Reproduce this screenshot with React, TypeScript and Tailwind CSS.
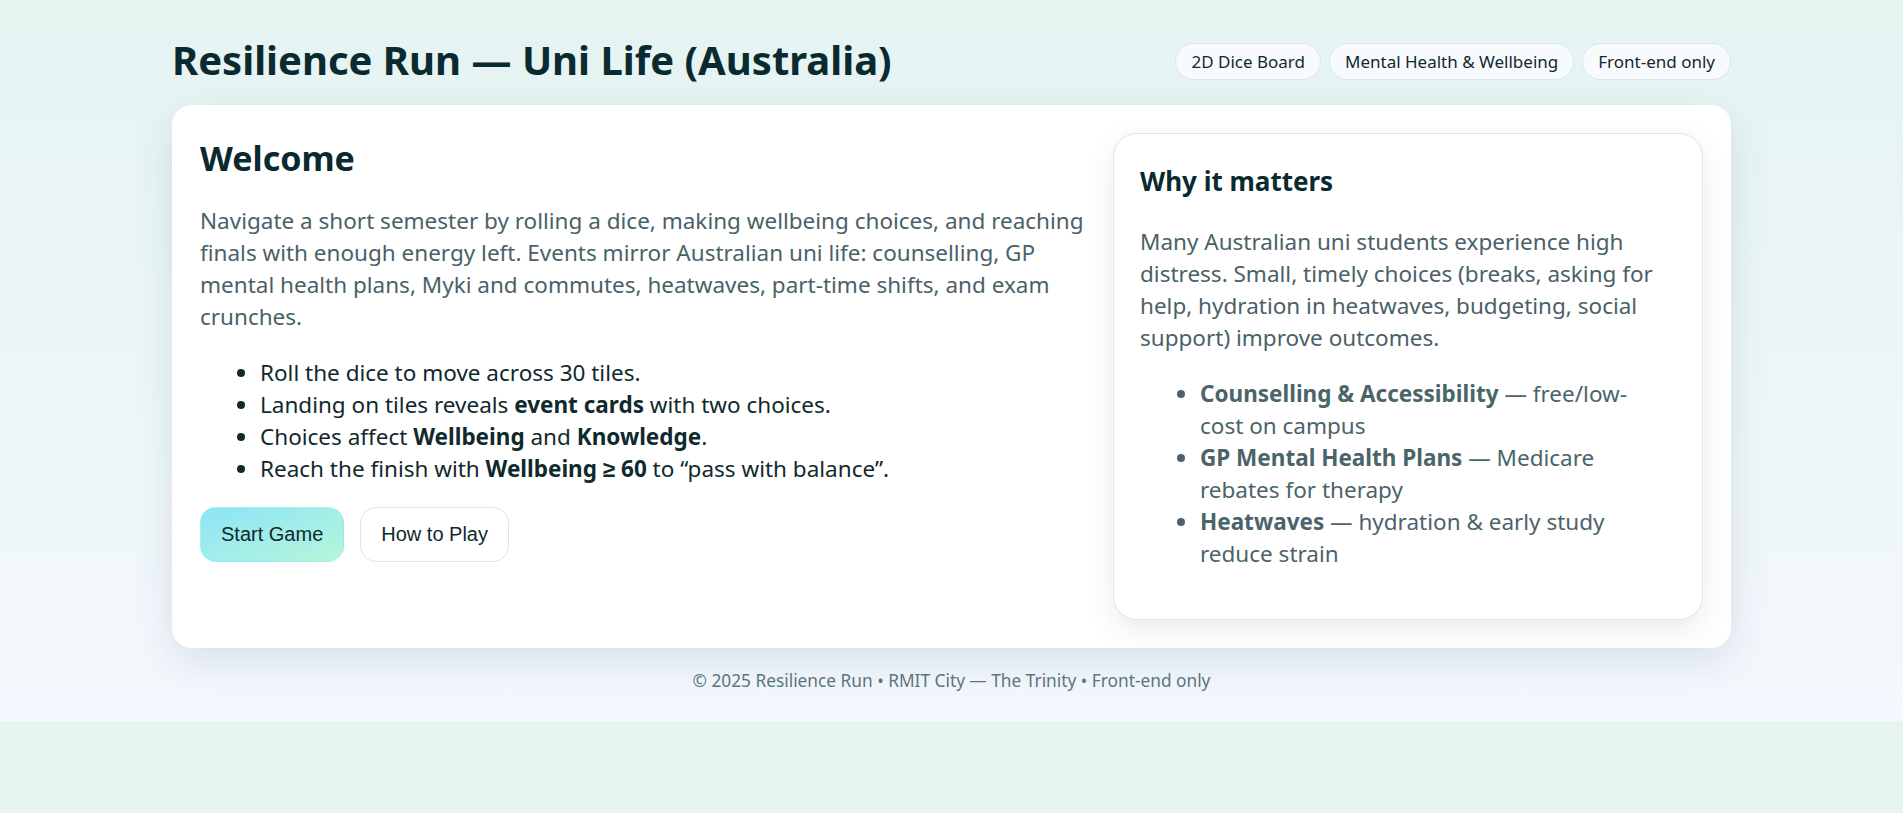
import React from 'react';

const font = "font-['Segoe_UI','Noto_Sans',sans-serif]";

const Pill: React.FC<{ label: string }> = ({ label }) => (
  <span className="rounded-full border border-[#d9e7ec] bg-[#f7fbfd] px-[15px] h-[37px] flex items-center text-[17px] text-[#10292d]">
    {label}
  </span>
);

const App: React.FC = () => {
  return (
    <div className={`min-h-screen bg-[#e6f5f0] ${font}`}>
      <div className="bg-gradient-to-b from-[#e4f4f1] to-[#f4f8fe]">
        <div className="mx-auto w-[1559px] pt-[39px]">
          <header className="flex h-[45px] items-center justify-between">
            <h1 className="mb-[5px] text-[40px] font-bold leading-[45px] text-[#0b2a2f]">Resilience Run — Uni Life (Australia)</h1>
            <div className="flex gap-2">
              <Pill label="2D Dice Board" />
              <Pill label="Mental Health & Wellbeing" />
              <Pill label="Front-end only" />
            </div>
          </header>

          <main className="mt-[21px] grid grid-cols-[1.5fr_1fr] gap-7 rounded-[20px] bg-white p-7 shadow-[0_14px_40px_rgba(30,60,90,0.12)]">
            <section>
              <h2 className="mt-[7px] text-[34px] font-bold leading-[36px] text-[#0b2a2f]">Welcome</h2>
              <p className="mt-[29px] text-[22.5px] leading-[32px] text-[#4a6168]">
                Navigate a short semester by rolling a dice, making wellbeing choices, and reaching finals with enough energy left. Events mirror Australian uni life: counselling, GP mental health plans, Myki and commutes, heatwaves, part-time shifts, and exam crunches.
              </p>
              <ul className="mt-6 list-disc pl-[60px] text-[22.5px] leading-[32px] text-[#10292d]">
                <li>Roll the dice to move across 30 tiles.</li>
                <li>Landing on tiles reveals <b>event cards</b> with two choices.</li>
                <li>Choices affect <b>Wellbeing</b> and <b>Knowledge</b>.</li>
                <li>Reach the finish with <b>Wellbeing ≥ 60</b> to “pass with balance”.</li>
              </ul>
              <div className="mt-[22px] flex gap-4 font-['Liberation_Sans',Arial,sans-serif] text-[20px] text-[#10292d]">
                <button className="rounded-[16px] border border-transparent bg-gradient-to-br from-[#8ce4f8] to-[#b6f6d8] px-5 py-[15px] leading-[23px]">
                  Start Game
                </button>
                <button className="rounded-[16px] border border-[#dbe6ec] bg-white px-5 py-[15px] leading-[23px]">
                  How to Play
                </button>
              </div>
            </section>

            <aside className="rounded-[24px] border border-[#dde7ee] bg-white px-[26px] pt-6 pb-6 shadow-[0_10px_28px_rgba(30,60,90,0.10)]">
              <h3 className="mt-2 text-[26px] font-bold leading-[30px] text-[#0b2a2f]">Why it matters</h3>
              <p className="mt-[30px] text-[22.5px] leading-[32px] text-[#4a6168]">
                Many Australian uni students experience high distress. Small, timely choices (breaks, asking for help, hydration in heatwaves, budgeting, social support) improve outcomes.
              </p>
              <ul className="mt-6 mb-[25px] list-disc pl-[60px] pr-[14px] text-[22.5px] leading-[32px] text-[#4a6469]">
                <li><b>Counselling &amp; Accessibility</b> — free/low-cost on campus</li>
                <li><b>GP Mental Health Plans</b> — Medicare rebates for therapy</li>
                <li><b>Heatwaves</b> — hydration &amp; early study reduce strain</li>
              </ul>
            </aside>
          </main>

          <footer className="pt-[21px] pb-[28px] text-center text-[17.3px] leading-[24px] text-[#5a767c]">
            © 2025 Resilience Run • RMIT City — The Trinity • Front-end only
          </footer>
        </div>
      </div>
    </div>
  );
};

export default App;
